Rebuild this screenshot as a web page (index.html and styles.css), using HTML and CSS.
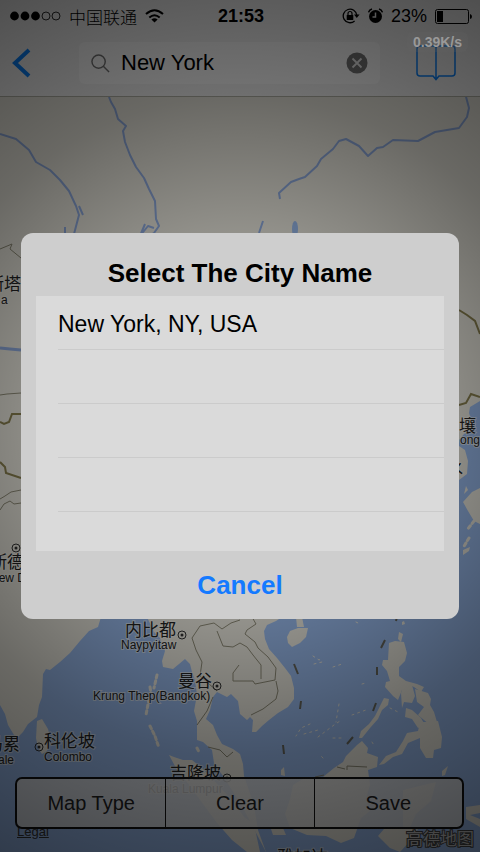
FILE: index.html
```html
<!DOCTYPE html>
<html lang="en">
<head>
<meta charset="utf-8">
<meta name="viewport" content="width=device-width, initial-scale=1">
<title>Select The City Name</title>
<link rel="stylesheet" href="styles.css">
</head>
<body>
<div class="app">
  <header class="header">
    <div class="status">
      <div class="status-left">
        <svg width="51" height="10" viewBox="0 0 51 10" aria-hidden="true"><circle cx="4.5" cy="5" r="4.4"/><circle cx="15" cy="5" r="4.4"/><circle cx="25.500" cy="5" r="4.400"/><g fill="none" stroke="#000" stroke-width=".8"><circle cx="36" cy="5" r="4"/><circle cx="46" cy="5" r="4"/></g></svg>
        <span>中国联通</span>
        <svg width="19" height="14" viewBox="0 0 19 14" aria-hidden="true"><g fill="none" stroke="#000" stroke-width="2"><path d="M1 5.100Q9.500-2.600 18 5.100"/><path d="M4.300 8.600Q9.500 3.900 14.700 8.600"/></g><path d="M6.400 10.500Q9.500 7.900 12.600 10.500L9.500 13.600Z"/></svg>
      </div>
      <time class="clock">21:53</time>
      <div class="status-right">
        <svg width="18" height="16" viewBox="0 0 18 16" aria-hidden="true"><path d="M14.800 7.200A6.800 6.800 0 1 0 12.600 13" fill="none" stroke="#000" stroke-width="1.300"/><path d="M12 6.500H17.600L14.800 10Z"/><rect x="4.700" y="7" width="6.600" height="5" rx=".6"/><path d="M6 7V5.500a2 2 0 0 1 4 0V7" fill="none" stroke="#000" stroke-width="1.200"/></svg>
        <svg width="15" height="16" viewBox="0 0 15 16" aria-hidden="true"><circle cx="7.500" cy="8.500" r="6.500"/><path d="M7.500 4.500V9H4.500" fill="none" stroke="#eee" stroke-width="1.500"/><path d="M.6 4.300Q1.300 1.800 4 1M14.400 4.300Q13.700 1.800 11 1" fill="none" stroke="#000" stroke-width="1.400"/></svg>
        <span>23%</span>
        <svg width="37" height="15" viewBox="0 0 37 15" aria-hidden="true"><rect x=".5" y=".5" width="33" height="14" rx="2" fill="none" stroke="#000"/><rect x="2" y="2" width="6" height="11"/><path d="M35 5Q37 5.500 37 7.500T35 10Z"/></svg>
      </div>
    </div>
    <nav class="nav">
      <button class="icon-button" aria-label="Back"><svg width="19" height="30" viewBox="0 0 19 30"><path d="M17 2L3 15L17 28" fill="none" stroke="#0a84ff" stroke-width="4"/></svg></button>
      <div class="search">
        <svg width="19" height="19" viewBox="0 0 20 20" aria-hidden="true"><g fill="none" stroke="#777" stroke-width="1.500"><circle cx="8" cy="8" r="7"/><path d="M13 13L19 19"/></g></svg>
        <input class="search-input" type="text" value="New York" aria-label="Search city">
        <button class="icon-button" aria-label="Clear search"><svg width="22" height="22" viewBox="0 0 22 22"><circle cx="11" cy="11" r="10.500" fill="#777"/><path d="M6.500 6.500L15.500 15.500M15.500 6.500L6.500 15.500" stroke="#eee" stroke-width="1.800"/></svg></button>
      </div>
      <button class="icon-button" aria-label="Bookmarks"><svg width="40" height="36" viewBox="0 0 40 36"><path d="M4 1H17Q20 1 20 3Q20 1 23 1H36Q39 1 39 4V28Q39 31 36 31H23L20 34.500L17 31H4Q1 31 1 28V4Q1 1 4 1ZM20 3V34" fill="none" stroke="#0a84ff" stroke-width="1.500"/></svg></button>
    </nav>
  </header>

  <main class="map">
    <svg class="map-canvas" viewBox="0 97 480 755" preserveAspectRatio="xMidYMid slice" role="img" aria-label="Map of Asia">
      <rect class="land" y="97" width="480" height="755"/>
      <path class="water" d="M480 401L475 404 470 407 469 413 472 422 473 429 464 434 459 440 400 530 300 590 282 617 276 621 267 625 264 631 265 639 269 649 277 658 285 668 291 676 294 688 294 699 288 707 278 713 269 720 262 726 256 732 252 732 253 720 250 717 247 720 240 714 238 701 231 694 227 697 217 692 213 697 210 710 206 719 213 725 217 735 222 744 233 749 240 754 243 764 244 776 254 805 258 830 266 852H480Z"/>
      <path class="water" d="M0 705L5 714 8 725 14 735 18 737 23 732 28 724 37 717 39 705 42 697 43 674 46 669 50 670 60 662 70 653 80 641 89 631 98 627 101 617H147L154 632 160 638 165 651 162 661 163 667 173 669 185 659 190 664 192 672 195 680 197 695 194 711 197 721 197 740 203 742 212 750 214 763 223 776 242 806 266 852H0Z"/>
      <g class="land">
        <path d="M37 721L42 719 48 729 51 741 47 751 42 754 38 748 36 738Z"/>
        <path d="M169 755L174 757 183 760 192 760 202 768 219 786 234 802 244 817 254 824 260 852H247L232 840 217 823 203 804 190 786 176 768Z"/>
        <path d="M290 799L293 785 306 777 323 777 334 768 343 762 346 756 357 745 362 741 368 748 367 753 378 757 377 767 368 770 370 785 366 799 370 811 361 818 354 838 341 843 326 836 307 835 290 828 285 814Z"/>
        <path d="M359 738L361 731 369 724 375 716 380 706 384 698 389 699 388 705 382 710 378 719 370 728 362 738Z"/>
        <path d="M287 637L290 631 298 628 308 628 306 637 300 643 292 647 288 643Z"/>
        <path d="M296 617H302L304 627 297 627Z"/>
        <path d="M389 643L395 641 404 642 407 653 405 661 399 667 399 676 406 681 417 684 424 687 421 692 414 687 407 684 402 690 398 700 393 696 385 687 386 682 390 681 387 671 382 665 383 660 388 660Z"/>
        <path d="M404 682L412 685 415 696 412 703 404 702 402 708 401 693ZM415 689L428 693 431 699 430 705 434 712 437 722 430 725 418 715 424 707 417 702ZM406 708L412 710 421 718 425 725 418 728 412 719 405 717Z"/>
        <path d="M403 741L407 733 418 731 420 722 430 722 438 721 442 737 441 748 434 750 433 758 426 758 420 748 420 738 408 743 402 754 393 757 384 764 379 765 386 756 396 752Z"/>
        <path d="M459 446L465 450 468 461 467 474 459 480ZM463 502L472 492 480 488V524L474 521 468 511ZM466 486L468 490 464 494Z"/>
        <path d="M463 550L470 547 469 551 463 555ZM402 622l2-1 1 3-3 1ZM399 632l4 2-2 8-3-3ZM281 770l3-3 1 9-4-1ZM442 771l6-5-3 9-3 1ZM466 807l14-2v8l-10 2 10 4v8l-14-8Z"/>
        <path d="M378 836L384 829 418 829 411 840 400 852 390 848ZM271 829l12-1 3 7-13 0ZM403 790l33-8-5 19-15 13-9 20-4-5Z"/>
      </g>
      <g class="islands"><path d="M157 675l-3 13M150 687l1 6M149 699l-3 16M150 726l5 10 4 12M197 748l2 4M474 521l-7 9M469 538l-6 10"/><path class="islets" d="M313 656l6 4 4-2M314 664l8-2M333 667l9-3M339 704l-3 18M310 724l-9 4-5 8M318 737l16-12 6-4M352 715l14-5M362 684l4-1M341 738l-8 0M304 734l14-4M372 742l3 5M390 708l8 4M323 758l-2-2M356 622l2 1"/></g>
      <g class="river">
        <path d="M109 97l2 5 4 7 3 10 8 7-3 5 2 11 5 13 6 12 8 11 5 11 6 12 1 18 3 7-5 7-7 4"/>
        <path d="M0 134l16 5 13 11 7 12 14 8 10 10 9 11 7 15 3 9-5 19-9 10"/>
        <path d="M79 206l4 9M65 227v6M145 224l-5 12 8-10 6 2M280 199l-1-6 12-11 8-3 6-2 12-11 4-7 12-10 6-8 7-2 13 7 9 10 9-8 6-1 10-7 25 1 17-9 24-4 8-11 2-9-4-15M263 221l-4 12"/>
        <path class="wide" d="M0 348l10 1 11 1"/>
        <ellipse class="lake" cx="295" cy="229" rx="3" ry="8"/>
      </g>
      <g class="border">
        <path d="M0 249l12-5-2 5 11 9M0 395l7-1 14-1M0 499l5-3 6-4 10-2"/>
        <path d="M252 617l4 7-9 6-2 4 10 8 3 6 10 9 8 11-1 12-20 4-2-3h-13l-7 0 0-8 6-8M192 638l8-12 14-3 8 6 9-6 9-3M192 638l4 12 6 12-2 14 17 15M217 631l6 15 10 1 7-4 7 4 6 8 8 10 0 14M276 681l2 10-2 8-13 10-12 6M213 697l-6 14-10 14M208 747l12 3 7 7 6-5M347 770v-4l20 1M337 767l8 2M315 777l9-2"/>
        <path class="frontier" d="M0 422l4 2 5-2 3-8h9M0 462l5 5 1 6 15 5M459 310l8 5 8 6 5 13M459 405l7-2 5-9 9 3"/>
        <path d="M0 510l4-6 6-3 4 3 7-1"/>
      </g>
      <g class="dash"><path d="M385 640l-4 8M377 667v8M376 703l-3 8M353 737l-6 7M294 664l4 10M301 701l-1 8M283 745l1 9M397 617l-1 4"/></g>
      <g class="pins"><circle cx="182" cy="635" r="4"/><circle cx="217" cy="686" r="4"/><circle cx="39" cy="747" r="4"/><circle cx="227" cy="778" r="4"/><circle cx="16" cy="548" r="4"/></g>
      <g class="dots"><circle cx="182" cy="635" r="1.500"/><circle cx="217" cy="686" r="1.500"/><circle cx="39" cy="747" r="1.500"/><circle cx="227" cy="778" r="1.500"/><circle cx="16" cy="548" r="1.500"/></g>
      <g class="place">
        <text x="-13" y="290">斯塔</text><text x="-10" y="568">斯德</text><text x="125" y="636">内比都</text><text x="178" y="687">曼谷</text><text x="-14" y="750">马累</text><text x="44" y="747">科伦坡</text><text x="170" y="779">吉隆坡</text><text x="277" y="863">雅加达</text><text x="459" y="432">壤</text><text x="446" y="474">水</text>
      </g>
      <g class="place-latin">
        <text x="1" y="304">a</text><text x="-10" y="582">New Delhi</text><text x="121" y="649">Naypyitaw</text><text x="93" y="700">Krung Thep(Bangkok)</text><text x="-12" y="764">Male</text><text x="44" y="761">Colombo</text><text x="148" y="793">Kuala Lumpur</text><text x="460" y="444">ong</text>
      </g>
      <text class="brand" x="406" y="845">高德地图</text>
    </svg>
    <a class="legal" href="#legal">Legal</a>
    <div class="segments">
      <button class="segment">Map Type</button>
      <button class="segment">Clear</button>
      <button class="segment">Save</button>
    </div>
  </main>

  <div class="overlay">
    <section class="dialog" role="dialog" aria-modal="true" aria-labelledby="dialog-title">
      <h1 class="dialog-title" id="dialog-title">Select The City Name</h1>
      <ul class="cities">
        <li class="city"><button class="city-button">New York, NY, USA</button></li>
        <li class="city"></li>
        <li class="city"></li>
        <li class="city"></li>
        <li class="city"></li>
      </ul>
      <button class="cancel">Cancel</button>
    </section>
  </div>
  <div class="speed">0.39K/s</div>
</div>
</body>
</html>
```
FILE: styles.css
```css
* { box-sizing: border-box; }
body { margin: 0; font-family: "Liberation Sans", "Noto Sans CJK SC", sans-serif; color: #000; }
button { padding: 0; border: 0; background: none; font: inherit; color: inherit; }
svg { display: block; flex: none; }

.app { position: relative; display: flex; flex-direction: column; min-height: 100vh; overflow: hidden; }

.header { background: #f6f6f6; border-bottom: 1px solid #b4b4a8; }
.status { display: grid; grid-template-columns: 1fr auto 1fr; align-items: center; height: 32px; padding: 0 8px 0 10px; font-size: 18px; }
.status-left, .status-right { display: flex; align-items: center; gap: 8px; }
.status-left { font-size: 17px; font-weight: 300; }
.status-right { justify-content: flex-end; }
.clock { font-size: 18px; font-weight: bold; }

.nav { display: flex; align-items: center; gap: 36px; height: 64px; padding: 0 24px 2px 12px; }
.icon-button { flex: none; }
.search { display: flex; flex: 1; align-items: center; gap: 11px; min-width: 0; height: 42px; padding: 0 12px; margin-left: 12px; border-radius: 6px; background: #fff; }
.search-input { flex: 1; width: 100%; min-width: 0; padding: 0; border: 0; outline: 0; background: none; font: inherit; font-size: 22px; color: #000; }

.map { position: relative; display: flex; flex: 1; flex-direction: column; justify-content: flex-end; padding: 0 16px 23px 15px; }
.map-canvas { position: absolute; inset: 0; width: 100%; height: 100%; }
.land { fill: #e9e7dd; }
.water, .lake { fill: #98b9eb; }
.islands { fill: none; stroke: #e9e7dd; stroke-width: 3; stroke-dasharray: 3 3; stroke-linecap: round; }
.islets { stroke-width: 1; stroke-dasharray: 2 4; }
.river { fill: none; stroke: #90ace0; stroke-width: 2; stroke-linejoin: round; }
.wide { stroke-width: 3; }
.lake { stroke: none; }
.border { fill: none; stroke: #8f8c78; stroke-width: 1; }
.frontier { stroke: #8a8150; stroke-width: 2; }
.dash { fill: none; stroke: #66665c; stroke-width: 2; }
.pins { fill: none; stroke: #333; }
.dots { fill: #333; }
.place, .place-latin { fill: #222; stroke: #f4f4ee; stroke-width: 2; stroke-opacity: .6; paint-order: stroke; }
.place { font-size: 17px; }
.place-latin { font-size: 12px; }
.brand { fill: #c4c4c4; stroke: #444; stroke-width: 2; paint-order: stroke; font-size: 17px; }
.legal { position: absolute; left: 17px; bottom: 13px; color: #333; font-size: 13px; }

.segments { position: relative; display: grid; grid-template-columns: repeat(3, 1fr); height: 52px; border: 2px solid #111; border-radius: 7px; background: rgba(225, 225, 225, .85); overflow: hidden; }
.segment { color: #222; font-size: 20px; }
.segment + .segment { border-left: 1px solid #111; }

.overlay { position: absolute; inset: 0; display: grid; align-items: center; padding: 0 21px; background: radial-gradient(circle at center, rgba(0, 0, 0, .15) 0, rgba(0, 0, 0, .38) 200px, rgba(0, 0, 0, .55) 330px, rgba(0, 0, 0, .68) 490px); }
.dialog { display: flex; flex-direction: column; padding: 0 15px; border-radius: 12px; background: #cecece; }
.dialog-title { margin: 0; padding: 20px 0 3px; font-size: 26px; line-height: 40px; font-weight: bold; text-align: center; }
.cities { margin: 0; padding: 0 0 0 22px; list-style: none; background: #dadada; }
.city { height: 54px; }
.city:last-child { height: 39px; }
.city:not(:last-child) { border-bottom: 1px solid #cbcbcb; }
.city-button { width: 100%; height: 100%; padding-top: 4px; font-size: 23px; text-align: left; }
.cancel { height: 68px; color: #147aff; font-size: 26px; font-weight: bold; }
.speed { position: absolute; top: 32px; right: 12px; padding: 2px 6px; border-radius: 6px; background: rgba(100, 100, 100, .2); color: #999; font-size: 14px; font-weight: bold; }
```
